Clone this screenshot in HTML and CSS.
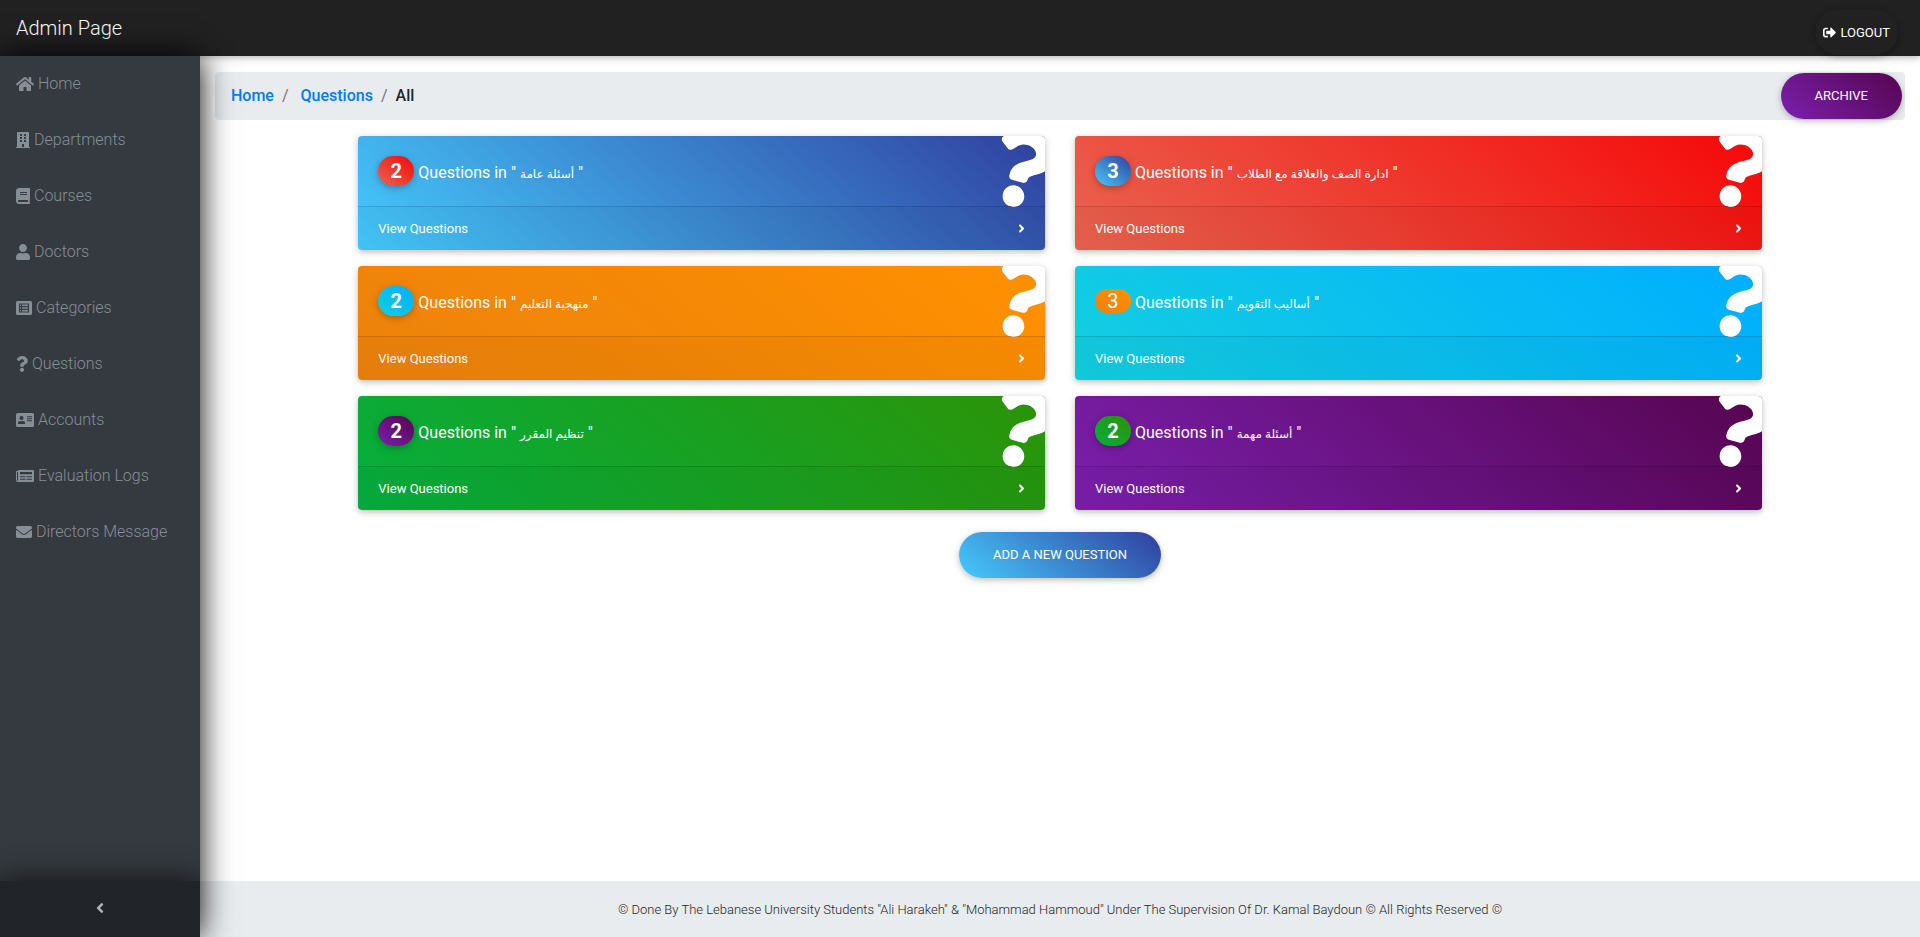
FILE: index.html
```html
<!DOCTYPE html>
<html lang="en">
<head>
<meta charset="utf-8">
<title>Admin Page</title>
<link rel="stylesheet" href="styles.css">
</head>
<body>
<svg class="sprite" aria-hidden="true">
  <symbol id="i-question" viewBox="0 0 384 512"><path d="M202.021 0C122.202 0 70.503 32.703 29.914 91.026c-7.363 10.58-5.093 25.086 5.178 32.874l43.138 32.709c10.373 7.865 25.132 6.026 33.253-4.148 25.049-31.381 43.63-49.449 82.757-49.449 30.764 0 68.816 19.799 68.816 49.631 0 22.552-18.617 34.134-48.993 51.164-35.423 19.86-82.299 44.576-82.299 106.405V320c0 13.255 10.745 24 24 24h72.471c13.255 0 24-10.745 24-24v-5.773c0-42.86 125.268-44.645 125.268-160.627C377.504 66.256 286.902 0 202.021 0zM192 373.459c-38.196 0-69.271 31.075-69.271 69.271 0 38.195 31.075 69.27 69.271 69.27s69.271-31.075 69.271-69.271-31.075-69.27-69.271-69.27z"/></symbol>
  <symbol id="i-right" viewBox="0 0 256 512"><path d="M224.3 273l-136 136c-9.4 9.4-24.6 9.4-33.9 0l-22.6-22.6c-9.4-9.4-9.4-24.6 0-33.9l96.4-96.4-96.4-96.4c-9.4-9.4-9.4-24.6 0-33.9L54.3 103c9.4-9.4 24.6-9.4 33.9 0l136 136c9.5 9.4 9.5 24.6.1 34z"/></symbol>
  <symbol id="i-left" viewBox="0 0 256 512"><path d="M31.7 239l136-136c9.4-9.4 24.6-9.4 33.9 0l22.6 22.6c9.4 9.4 9.4 24.6 0 33.9L127.9 256l96.4 96.4c9.4 9.4 9.4 24.6 0 33.9L201.7 409c-9.4 9.4-24.6 9.4-33.9 0l-136-136c-9.5-9.4-9.5-24.6-.1-34z"/></symbol>
</svg>
<header class="topbar">
  <a class="brand" href="#">Admin Page</a>
  <button class="btn btn-logout" type="button"><svg class="icon" viewBox="0 0 512 512"><path d="M497 273L329 441c-15 15-41 4.500-41-17v-96H152c-13.300 0-24-10.700-24-24v-96c0-13.300 10.700-24 24-24h136V88c0-21.400 25.900-32 41-17l168 168c9.300 9.400 9.300 24.600 0 34zM192 436v-40c0-6.600-5.400-12-12-12H96c-17.700 0-32-14.300-32-32V160c0-17.700 14.300-32 32-32h84c6.600 0 12-5.400 12-12V76c0-6.600-5.400-12-12-12H96c-53 0-96 43-96 96v192c0 53 43 96 96 96h84c6.600 0 12-5.400 12-12z"/></svg> LOGOUT</button>
</header>
<div class="layout">
  <nav class="sidebar">
    <ul class="menu">
      <li><a href="#"><svg class="icon w18" viewBox="0 0 576 512"><path d="M280.370 148.260L96 300.110V464a16 16 0 0 0 16 16l112.060-.29a16 16 0 0 0 15.920-16V368a16 16 0 0 1 16-16h64a16 16 0 0 1 16 16v95.640a16 16 0 0 0 16 16.050L464 480a16 16 0 0 0 16-16V300L295.670 148.260a12.190 12.190 0 0 0-15.300 0zM571.600 251.470L488 182.560V44.050a12 12 0 0 0-12-12h-56a12 12 0 0 0-12 12v72.610L318.470 43a48 48 0 0 0-61 0L4.340 251.470a12 12 0 0 0-1.600 16.900l25.500 31A12 12 0 0 0 45.150 301l235.220-193.740a12.190 12.190 0 0 1 15.300 0L530.900 301a12 12 0 0 0 16.900-1.600l25.500-31a12 12 0 0 0-1.700-16.930z"/></svg> Home</a></li>
      <li><a href="#"><svg class="icon w14" viewBox="0 0 448 512"><path d="M436 480h-20V24c0-13.255-10.745-24-24-24H56C42.745 0 32 10.745 32 24v456H12c-6.627 0-12 5.373-12 12v20h448v-20c0-6.627-5.373-12-12-12zM128 76c0-6.627 5.373-12 12-12h40c6.627 0 12 5.373 12 12v40c0 6.627-5.373 12-12 12h-40c-6.627 0-12-5.373-12-12V76zm0 96c0-6.627 5.373-12 12-12h40c6.627 0 12 5.373 12 12v40c0 6.627-5.373 12-12 12h-40c-6.627 0-12-5.373-12-12v-40zm52 148h-40c-6.627 0-12-5.373-12-12v-40c0-6.627 5.373-12 12-12h40c6.627 0 12 5.373 12 12v40c0 6.627-5.373 12-12 12zm76 160h-64v-84c0-6.627 5.373-12 12-12h40c6.627 0 12 5.373 12 12v84zm64-172c0 6.627-5.373 12-12 12h-40c-6.627 0-12-5.373-12-12v-40c0-6.627 5.373-12 12-12h40c6.627 0 12 5.373 12 12v40zm0-96c0 6.627-5.373 12-12 12h-40c-6.627 0-12-5.373-12-12v-40c0-6.627 5.373-12 12-12h40c6.627 0 12 5.373 12 12v40zm0-96c0 6.627-5.373 12-12 12h-40c-6.627 0-12-5.373-12-12V76c0-6.627 5.373-12 12-12h40c6.627 0 12 5.373 12 12v40z"/></svg> Departments</a></li>
      <li><a href="#"><svg class="icon w14" viewBox="0 0 448 512"><path d="M448 360V24c0-13.300-10.700-24-24-24H96C43 0 0 43 0 96v320c0 53 43 96 96 96h328c13.300 0 24-10.700 24-24v-16c0-7.500-3.500-14.300-8.900-18.700-4.200-15.400-4.200-59.300 0-74.700 5.400-4.300 8.900-11.100 8.900-18.600zM128 134c0-3.300 2.700-6 6-6h212c3.300 0 6 2.700 6 6v20c0 3.300-2.700 6-6 6H134c-3.300 0-6-2.700-6-6v-20zm0 64c0-3.300 2.700-6 6-6h212c3.300 0 6 2.700 6 6v20c0 3.300-2.700 6-6 6H134c-3.300 0-6-2.700-6-6v-20zm253.400 250H96c-17.700 0-32-14.300-32-32 0-17.600 14.400-32 32-32h285.400c-1.900 17.100-1.900 46.900 0 64z"/></svg> Courses</a></li>
      <li><a href="#"><svg class="icon w14" viewBox="0 0 448 512"><path d="M224 256c70.700 0 128-57.300 128-128S294.700 0 224 0 96 57.300 96 128s57.300 128 128 128zm89.600 32h-16.700c-22.200 10.200-46.900 16-72.900 16s-50.600-5.800-72.900-16h-16.700C60.200 288 0 348.200 0 422.400V464c0 26.500 21.500 48 48 48h352c26.500 0 48-21.500 48-48v-41.600c0-74.200-60.200-134.400-134.400-134.400z"/></svg> Doctors</a></li>
      <li><a href="#"><svg class="icon w16" viewBox="0 0 512 512"><path fill-rule="evenodd" d="M48 32h416a48 48 0 0 1 48 48v352a48 48 0 0 1-48 48H48a48 48 0 0 1-48-48V80a48 48 0 0 1 48-48zM96 112v288h320V112zM128 144h32v48h-32zm64 0h192v48H192zm-64 88h32v48h-32zm64 0h192v48H192zm-64 88h32v48h-32zm64 0h192v48H192z"/></svg> Categories</a></li>
      <li><a href="#"><svg class="icon w12"><use href="#i-question"/></svg> Questions</a></li>
      <li><a href="#"><svg class="icon w18" viewBox="0 0 576 512"><path fill-rule="evenodd" d="M528 32H48A48 48 0 0 0 0 80v352a48 48 0 0 0 48 48h480a48 48 0 0 0 48-48V80a48 48 0 0 0-48-48zM176 128a64 64 0 1 1 0 128 64 64 0 0 1 0-128zm112 236c0 11-10 20-22.400 20H86.400C74 384 64 375 64 364v-19c0-32 30-57 67-57h5c26 11 54 11 80 0h5c37 0 67 25 67 57zM352 136h160v32H352zm0 64h160v32H352zm0 64h160v32H352z"/></svg> Accounts</a></li>
      <li><a href="#"><svg class="icon w18" viewBox="0 0 576 512"><path fill-rule="evenodd" d="M552 64H88c-13 0-24 11-24 24v8H24C11 96 0 107 0 120v272c0 31 25 56 56 56h496c13 0 24-11 24-24V88c0-13-11-24-24-24zM32 128h32v264a8 8 0 0 1-32 0zM128 128h384v72H128zm0 136h176v32H128zm208 0h176v32H336zM128 344h176v32H128zm208 0h176v32H336z"/></svg> Evaluation Logs</a></li>
      <li><a href="#"><svg class="icon w16" viewBox="0 0 512 512"><path d="M502.300 190.800c3.900-3.100 9.700-.2 9.700 4.700V400c0 26.500-21.500 48-48 48H48c-26.500 0-48-21.500-48-48V195.600c0-5 5.700-7.800 9.700-4.700 22.400 17.400 52.100 39.500 154.100 113.600 21.100 15.400 56.700 47.800 92.200 47.600 35.700.3 72-32.800 92.300-47.600 102-74.100 131.600-96.300 154-113.700zM256 320c23.200.4 56.600-29.200 73.400-41.400 132.700-96.300 142.800-104.700 173.400-128.700 5.800-4.500 9.200-11.500 9.200-18.900v-19c0-26.500-21.500-48-48-48H48c-26.500 0-48 21.500-48 48v19c0 7.400 3.400 14.300 9.200 18.900 30.600 23.900 40.700 32.400 173.400 128.700 16.800 12.200 50.200 41.800 73.400 41.400z"/></svg> Directors Message</a></li>
    </ul>
    <button class="toggle" type="button" aria-label="Collapse sidebar"><svg class="icon"><use href="#i-left"/></svg></button>
  </nav>
  <div class="page">
    <main class="content">
      <div class="crumbs">
        <nav class="trail" aria-label="Breadcrumb"><a href="#">Home</a><span class="sep">/</span><a class="second" href="#">Questions</a><span class="sep">/</span><span>All</span></nav>
        <button class="btn purple" type="button">ARCHIVE</button>
      </div>
      <section class="cards">
        <article class="card blue"><svg class="mark"><use href="#i-question"/></svg><h2 class="card-body"><span class="badge red">2</span><span>Questions in " <bdi lang="ar">أسئلة عامة</bdi> "</span></h2><a class="card-link" href="#">View Questions<svg class="icon"><use href="#i-right"/></svg></a></article>
        <article class="card red"><svg class="mark"><use href="#i-question"/></svg><h2 class="card-body"><span class="badge blue">3</span><span>Questions in " <bdi lang="ar">ادارة الصف والعلاقة مع الطلاب</bdi> "</span></h2><a class="card-link" href="#">View Questions<svg class="icon"><use href="#i-right"/></svg></a></article>
        <article class="card orange"><svg class="mark"><use href="#i-question"/></svg><h2 class="card-body"><span class="badge cyan">2</span><span>Questions in " <bdi lang="ar">منهجية التعليم</bdi> "</span></h2><a class="card-link" href="#">View Questions<svg class="icon"><use href="#i-right"/></svg></a></article>
        <article class="card cyan"><svg class="mark"><use href="#i-question"/></svg><h2 class="card-body"><span class="badge orange flat">3</span><span>Questions in " <bdi lang="ar">أساليب التقويم</bdi> "</span></h2><a class="card-link" href="#">View Questions<svg class="icon"><use href="#i-right"/></svg></a></article>
        <article class="card green"><svg class="mark"><use href="#i-question"/></svg><h2 class="card-body"><span class="badge purple">2</span><span>Questions in " <bdi lang="ar">تنظيم المقرر</bdi> "</span></h2><a class="card-link" href="#">View Questions<svg class="icon"><use href="#i-right"/></svg></a></article>
        <article class="card purple"><svg class="mark"><use href="#i-question"/></svg><h2 class="card-body"><span class="badge green">2</span><span>Questions in " <bdi lang="ar">أسئلة مهمة</bdi> "</span></h2><a class="card-link" href="#">View Questions<svg class="icon"><use href="#i-right"/></svg></a></article>
      </section>
      <button class="btn blue add" type="button">ADD A NEW QUESTION</button>
    </main>
    <footer class="footer">© Done By The Lebanese University Students "Ali Harakeh" &amp; "Mohammad Hammoud" Under The Supervision Of Dr. Kamal Baydoun © All Rights Reserved ©</footer>
  </div>
</div>
</body>
</html>
```
FILE: styles.css
```css
* { box-sizing: border-box; }
body {
  margin: 0;
  min-height: 100vh;
  display: flex;
  flex-direction: column;
  background: #fff;
  color: #212529;
  font: 300 16px/24px Roboto, "DejaVu Sans", sans-serif;
}
a { text-decoration: none; color: inherit; }
button { font-family: inherit; border: 0; cursor: pointer; }
.sprite { display: none; }
.icon { height: 1em; fill: currentColor; flex: none; }
.w12 { width: 12px; }
.w14 { width: 14px; }
.w16 { width: 16px; }
.w18 { width: 18px; }

.topbar {
  display: flex;
  justify-content: space-between;
  height: 56px;
  padding: 0 16px;
  background: #212121;
  box-shadow: 0 2px 5px rgba(0, 0, 0, .16), 0 2px 10px rgba(0, 0, 0, .12);
}
.brand { color: #fff; font-size: 20px; line-height: 56px; }

.btn {
  border-radius: 160px;
  padding: 0 34px 1px;
  height: 46px;
  color: #fff;
  font-size: 13px;
  font-weight: 400;
  box-shadow: 0 2px 5px rgba(0, 0, 0, .16), 0 2px 10px rgba(0, 0, 0, .12);
}
.btn-logout {
  display: flex;
  align-items: center;
  gap: 4px;
  margin: 9px 6px 0 0;
  padding: 0 8px;
  background: #212121;
}
.btn-logout .icon { width: 13px; height: 13px; }

.layout { flex: 1; display: flex; }
.sidebar {
  position: relative;
  z-index: 1;
  flex: none;
  width: 200px;
  display: flex;
  flex-direction: column;
  overflow: hidden;
  background: #343a40;
  color: #868e96;
  box-shadow: 0 0 30px #000;
}
.menu { flex: 1; margin: 0; padding: 0; list-style: none; }
.menu a { display: flex; align-items: center; gap: 4px; height: 56px; padding: 0 16px; }
.toggle {
  display: flex;
  align-items: center;
  justify-content: center;
  height: 56px;
  padding: 0 0 2px;
  background: #212529;
  color: #adb5bd;
  box-shadow: 0 0 30px #111;
}
.toggle .icon { width: 8px; height: 16px; }

.page { flex: 1; display: flex; flex-direction: column; min-width: 0; }
.content { flex: 1; display: flex; flex-direction: column; padding: 16px 15px; }
.crumbs {
  display: flex;
  align-items: center;
  justify-content: space-between;
  height: 48px;
  padding: 0 3px 0 16px;
  border-radius: 4px;
  background: #e9ecef;
}
.trail { display: flex; gap: 8px; font-weight: 500; }
.trail a { color: #007bff; }
.trail .second { margin-left: 4px; }
.sep { color: #6c757d; font-weight: 400; }

.cards {
  display: grid;
  grid-template-columns: 1fr 1fr;
  gap: 16px 30px;
  width: calc((100% + 30px) * 10 / 12 - 30px);
  margin: 16px auto 0;
}
.card {
  position: relative;
  overflow: hidden;
  border-radius: 4px;
  color: #fff;
  font-weight: 400;
}
.card, .badge { box-shadow: 0 2px 5px rgba(0, 0, 0, .16), 0 2px 10px rgba(0, 0, 0, .12); }
.mark {
  position: absolute;
  top: -8px;
  right: -6px;
  width: 60px;
  height: 80px;
  fill: #fff;
  transform: rotate(15deg);
}
.card-body {
  display: flex;
  align-items: baseline;
  gap: 4px;
  height: 70px;
  margin: 0;
  padding: 20px;
  font-size: 16px;
  font-weight: 400;
  line-height: 24px;
}
.card-body bdi { font-size: 12px; }
.badge {
  width: 36px;
  border-radius: 160px;
  font-size: 20px;
  font-weight: 700;
  line-height: 30px;
  text-align: center;
}
.badge.flat { font-weight: 400; line-height: 24px; margin-top: 3px; box-shadow: none; }
.card-link {
  position: relative;
  display: flex;
  align-items: center;
  justify-content: space-between;
  height: 44px;
  padding: 0 20px;
  border-top: 1px solid rgba(0, 0, 0, .125);
  background: rgba(0, 0, 0, .03);
  font-size: 13px;
}
.card-link .icon { width: 7px; height: 13px; }
.add { align-self: center; margin-top: 22px; }

.blue { background: linear-gradient(40deg, #45cafc, #303f9f); }
.red { background: linear-gradient(40deg, #e96450, #f50808); }
.orange { background: linear-gradient(40deg, #ec820c, #ff9000); }
.cyan { background: linear-gradient(40deg, #14cfe0, #00aeff); }
.green { background: linear-gradient(40deg, #05af3e, #2b9307); }
.purple { background: linear-gradient(40deg, #7b1fae, #560550); }

.footer {
  display: flex;
  align-items: center;
  justify-content: center;
  height: 56px;
  padding-top: 2px;
  background: #e9ecef;
  font-size: 13px;
}
```
